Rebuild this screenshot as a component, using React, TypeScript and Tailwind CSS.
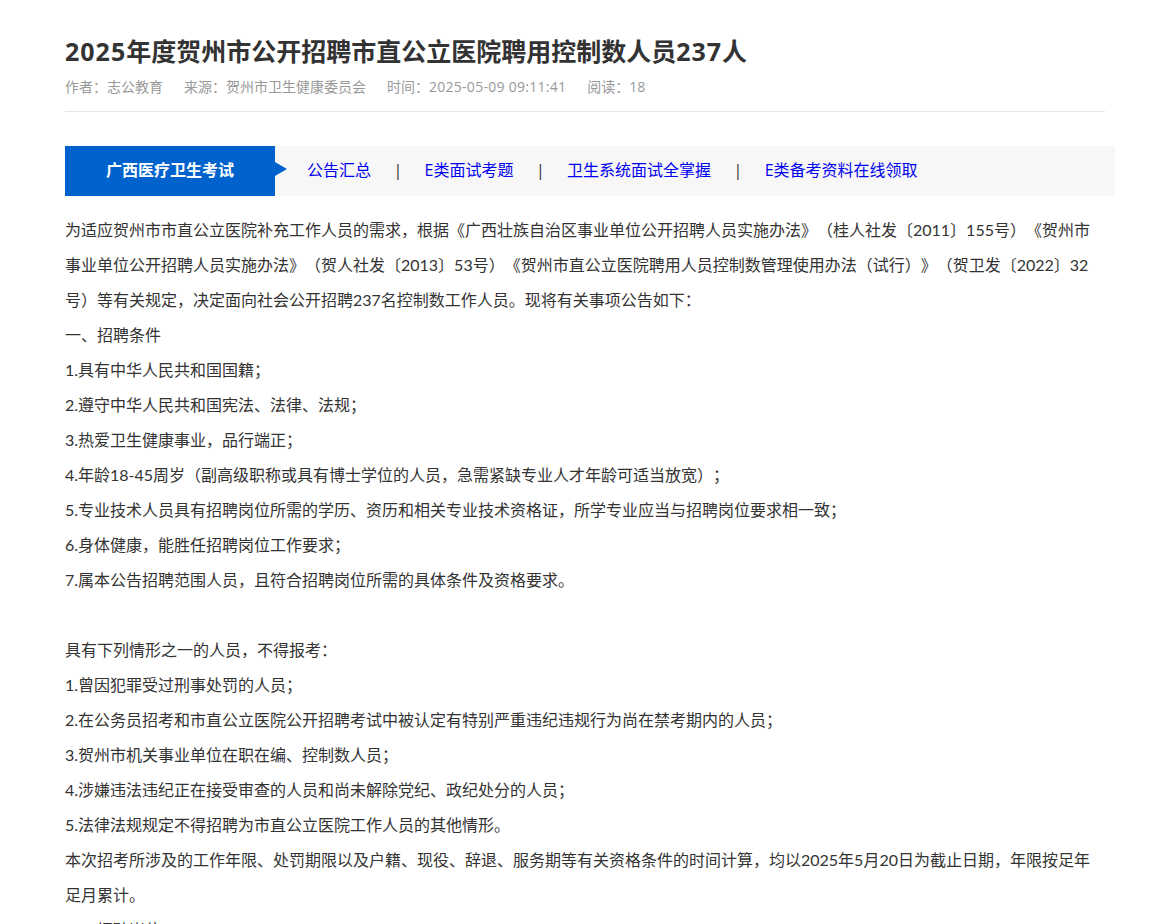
import React from 'react';

const links = ['公告汇总', 'E类面试考题', '卫生系统面试全掌握', 'E类备考资料在线领取'];

const paragraphs = [
  '为适应贺州市市直公立医院补充工作人员的需求，根据《广西壮族自治区事业单位公开招聘人员实施办法》（桂人社发〔2011〕155号）《贺州市事业单位公开招聘人员实施办法》（贺人社发〔2013〕53号）《贺州市直公立医院聘用人员控制数管理使用办法（试行）》（贺卫发〔2022〕32号）等有关规定，决定面向社会公开招聘237名控制数工作人员。现将有关事项公告如下：',
  '一、招聘条件',
  '1.具有中华人民共和国国籍；',
  '2.遵守中华人民共和国宪法、法律、法规；',
  '3.热爱卫生健康事业，品行端正；',
  '4.年龄18-45周岁（副高级职称或具有博士学位的人员，急需紧缺专业人才年龄可适当放宽）；',
  '5.专业技术人员具有招聘岗位所需的学历、资历和相关专业技术资格证，所学专业应当与招聘岗位要求相一致；',
  '6.身体健康，能胜任招聘岗位工作要求；',
  '7.属本公告招聘范围人员，且符合招聘岗位所需的具体条件及资格要求。',
  '',
  '具有下列情形之一的人员，不得报考：',
  '1.曾因犯罪受过刑事处罚的人员；',
  '2.在公务员招考和市直公立医院公开招聘考试中被认定有特别严重违纪违规行为尚在禁考期内的人员；',
  '3.贺州市机关事业单位在职在编、控制数人员；',
  '4.涉嫌违法违纪正在接受审查的人员和尚未解除党纪、政纪处分的人员；',
  '5.法律法规规定不得招聘为市直公立医院工作人员的其他情形。',
  '本次招考所涉及的工作年限、处罚期限以及户籍、现役、辞退、服务期等有关资格条件的时间计算，均以2025年5月20日为截止日期，年限按足年足月累计。',
  '二、招聘岗位',
];

export default function App() {
  return (
    <div className="h-screen overflow-hidden bg-white font-['Open_Sans','Noto_Sans_CJK_SC',sans-serif] [text-spacing-trim:space-all]">
      <div className="ml-[65px] w-[1050px]">
        <div className="w-[1040px] border-b border-[#e5e5e5] pt-[32px] pb-[14px]">
          <h1 className="text-[25px] leading-[38px] font-bold text-[#333]">
            <span className="tracking-[1px]">2025</span>年度贺州市公开招聘市直公立医院聘用控制数人员<span className="tracking-[1px]">237</span>人
          </h1>
          <div className="mt-[7px] flex gap-[21px] text-[14px] leading-[20px] text-[#999]">
            <span>作者：志公教育</span>
            <span>来源：贺州市卫生健康委员会</span>
            <span>时间：<span className="tracking-[0.27px]">2025-05-09 09:11:41</span></span>
            <span>阅读：18</span>
          </div>
        </div>

        <div className="mt-[34px] flex h-[50px] items-center bg-[#f7f7f7]">
          <div className="relative flex h-full w-[210px] items-center justify-center bg-[#0062cc] pb-[2px] text-[16px] font-bold text-white">
            广西医疗卫生考试
            <span className="absolute top-[16px] left-full h-0 w-0 border-y-[7px] border-l-[12px] border-y-transparent border-l-[#0062cc]" />
          </div>
          <div className="ml-[32px] flex items-center pb-[2px] text-[16px]">
            {links.map((link, i) => (
              <React.Fragment key={link}>
                {i > 0 && <span className="w-[53.6px] text-center text-[#333]">|</span>}
                <a className="text-[#0000ee]">{link}</a>
              </React.Fragment>
            ))}
          </div>
        </div>

        <div className="mt-[16px] w-[1040px] font-['Lato','Noto_Sans_CJK_SC',sans-serif] text-[16px] leading-[35px] text-[#333]">
          {paragraphs.map((text, i) => (
            <p key={i} className="min-h-[35px]">{text}</p>
          ))}
        </div>
      </div>
    </div>
  );
}
